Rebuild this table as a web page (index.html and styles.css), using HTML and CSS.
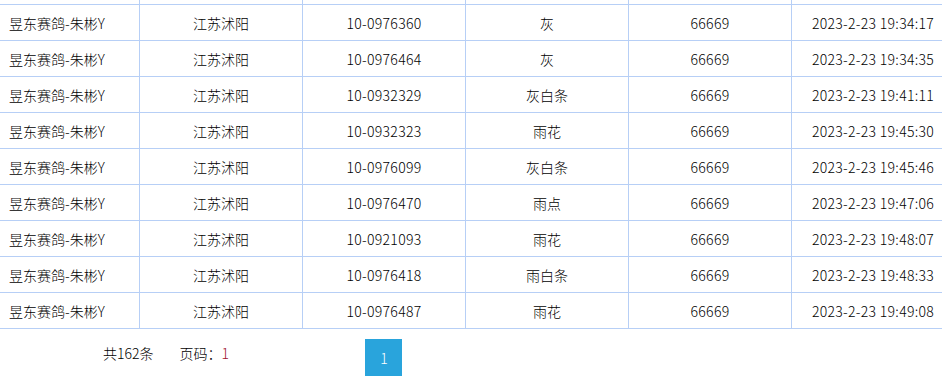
FILE: index.html
```html
<!DOCTYPE html>
<html lang="zh-CN">
<head>
<meta charset="utf-8">
<title>记录列表</title>
<link rel="stylesheet" href="styles.css">
</head>
<body>
<div class="sheet">
  <div class="grid">
    <div class="cell cut"></div><div class="cell cut"></div><div class="cell cut"></div><div class="cell cut"></div><div class="cell cut"></div><div class="cell cut"></div>

    <div class="cell first">昱东赛鸽-朱彬Y</div><div class="cell">江苏沭阳</div><div class="cell num">10-0976360</div><div class="cell">灰</div><div class="cell num">66669</div><div class="cell num">2023-2-23 19:34:17</div>
    <div class="cell first">昱东赛鸽-朱彬Y</div><div class="cell">江苏沭阳</div><div class="cell num">10-0976464</div><div class="cell">灰</div><div class="cell num">66669</div><div class="cell num">2023-2-23 19:34:35</div>
    <div class="cell first">昱东赛鸽-朱彬Y</div><div class="cell">江苏沭阳</div><div class="cell num">10-0932329</div><div class="cell">灰白条</div><div class="cell num">66669</div><div class="cell num">2023-2-23 19:41:11</div>
    <div class="cell first">昱东赛鸽-朱彬Y</div><div class="cell">江苏沭阳</div><div class="cell num">10-0932323</div><div class="cell">雨花</div><div class="cell num">66669</div><div class="cell num">2023-2-23 19:45:30</div>
    <div class="cell first">昱东赛鸽-朱彬Y</div><div class="cell">江苏沭阳</div><div class="cell num">10-0976099</div><div class="cell">灰白条</div><div class="cell num">66669</div><div class="cell num">2023-2-23 19:45:46</div>
    <div class="cell first">昱东赛鸽-朱彬Y</div><div class="cell">江苏沭阳</div><div class="cell num">10-0976470</div><div class="cell">雨点</div><div class="cell num">66669</div><div class="cell num">2023-2-23 19:47:06</div>
    <div class="cell first">昱东赛鸽-朱彬Y</div><div class="cell">江苏沭阳</div><div class="cell num">10-0921093</div><div class="cell">雨花</div><div class="cell num">66669</div><div class="cell num">2023-2-23 19:48:07</div>
    <div class="cell first">昱东赛鸽-朱彬Y</div><div class="cell">江苏沭阳</div><div class="cell num">10-0976418</div><div class="cell">雨白条</div><div class="cell num">66669</div><div class="cell num">2023-2-23 19:48:33</div>
    <div class="cell first">昱东赛鸽-朱彬Y</div><div class="cell">江苏沭阳</div><div class="cell num">10-0976487</div><div class="cell">雨花</div><div class="cell num">66669</div><div class="cell num">2023-2-23 19:49:08</div>
  </div>
</div>
<div class="pager">
  <span class="total">共162条</span>
  <span class="current">页码：<em>1</em></span>
  <a class="page-btn">1</a>
</div>
</body>
</html>
```
FILE: styles.css
```css
html, body {
  margin: 0;
  padding: 0;
  background: #fff;
}
body {
  font-family: "Noto Sans CJK SC", sans-serif;
  font-size: 14px;
  font-weight: 300;
  color: #000;
  width: 942px;
  overflow: hidden;
}
.sheet {
  width: 942px;
  overflow: hidden;
}
.grid {
  display: grid;
  width: 954px;
  grid-template-columns: 139px repeat(5, 162px);
  grid-template-rows: 4px repeat(9, 35px);
  gap: 1px;
  background: #b7cff6;
  border-bottom: 1px solid #b7cff6;
}
.cell {
  background: #fff;
  display: flex;
  align-items: center;
  justify-content: center;
  white-space: nowrap;
  overflow: hidden;
  line-height: 20px;
}
.cell.num {
  letter-spacing: 0.3px;
}
.cell.first {
  justify-content: flex-start;
  padding-left: 9px;
}
.pager {
  display: flex;
  align-items: flex-start;
  padding-left: 103px;
  padding-top: 10px;
}
.total {
  margin-top: 4px;
  margin-right: 26px;
  line-height: 20px;
}
.current {
  margin-top: 4px;
  line-height: 20px;
  width: 186px;
}
.current em {
  font-style: normal;
  color: #a0122e;
}
.page-btn {
  width: 37px;
  height: 37px;
  background: #29a4dc;
  color: #fff;
  display: flex;
  align-items: center;
  justify-content: center;
}
```
